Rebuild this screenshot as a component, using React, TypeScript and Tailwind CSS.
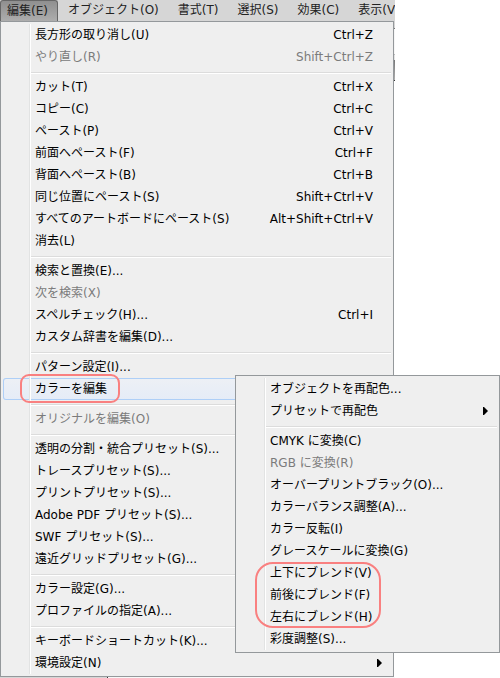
import { Fragment } from "react";
import clsx from "clsx";

type MenuEntry = {
  label: string;
  shortcut?: string;
  disabled?: boolean;
  arrow?: boolean;
  active?: boolean;
  children?: MenuEntry[][];
  // circles this row and the following ones
  markClass?: string;
};

const menuBar = ["編集(E)", "オブジェクト(O)", "書式(T)", "選択(S)", "効果(C)", "表示(V)"];

const colorGroups: MenuEntry[][] = [
  [{ label: "オブジェクトを再配色..." }, { label: "プリセットで再配色", arrow: true }],
  [
    { label: "CMYK に変換(C)" },
    { label: "RGB に変換(R)", disabled: true },
    { label: "オーバープリントブラック(O)..." },
    { label: "カラーバランス調整(A)..." },
    { label: "カラー反転(I)" },
    { label: "グレースケールに変換(G)" },
    { label: "上下にブレンド(V)", markClass: "top-0 left-[17px] w-[126px] h-[66px] rounded-[18px]" },
    { label: "前後にブレンド(F)" },
    { label: "左右にブレンド(H)" },
    { label: "彩度調整(S)..." },
  ],
];

const editGroups: MenuEntry[][] = [
  [
    { label: "長方形の取り消し(U)", shortcut: "Ctrl+Z" },
    { label: "やり直し(R)", shortcut: "Shift+Ctrl+Z", disabled: true },
  ],
  [
    { label: "カット(T)", shortcut: "Ctrl+X" },
    { label: "コピー(C)", shortcut: "Ctrl+C" },
    { label: "ペースト(P)", shortcut: "Ctrl+V" },
    { label: "前面へペースト(F)", shortcut: "Ctrl+F" },
    { label: "背面へペースト(B)", shortcut: "Ctrl+B" },
    { label: "同じ位置にペースト(S)", shortcut: "Shift+Ctrl+V" },
    { label: "すべてのアートボードにペースト(S)", shortcut: "Alt+Shift+Ctrl+V" },
    { label: "消去(L)" },
  ],
  [
    { label: "検索と置換(E)..." },
    { label: "次を検索(X)", disabled: true },
    { label: "スペルチェック(H)...", shortcut: "Ctrl+I" },
    { label: "カスタム辞書を編集(D)..." },
  ],
  [
    { label: "パターン設定(I)..." },
    {
      label: "カラーを編集",
      active: true,
      children: colorGroups,
      markClass: "-top-1 left-[17px] w-[100px] h-[29px] rounded-[9px]",
    },
  ],
  [{ label: "オリジナルを編集(O)", disabled: true }],
  [
    { label: "透明の分割・統合プリセット(S)..." },
    { label: "トレースプリセット(S)..." },
    { label: "プリントプリセット(S)..." },
    { label: "Adobe PDF プリセット(S)..." },
    { label: "SWF プリセット(S)..." },
    { label: "遠近グリッドプリセット(G)..." },
  ],
  [{ label: "カラー設定(G)..." }, { label: "プロファイルの指定(A)..." }],
  [{ label: "キーボードショートカット(K)..." }, { label: "環境設定(N)", arrow: true }],
];

function Separator() {
  return (
    <li role="separator" className="flex h-2">
      <span className="w-[27px] border-r border-[#e2e3e3]" />
      <span className="flex-1 border-l border-white pt-1">
        <span className="block h-[2px] border-t border-[#dcdcdc] bg-white" />
      </span>
    </li>
  );
}

function MenuRow({ entry }: { entry: MenuEntry }) {
  return (
    <li className="relative">
      <button
        disabled={entry.disabled}
        className={clsx(
          "flex h-[22px] w-full items-stretch text-left leading-[22px] whitespace-nowrap",
          entry.disabled ? "text-[#7b7b7b]" : "text-black",
          entry.active && "rounded-[3px] bg-linear-to-b from-[#edf0f5] to-[#e5ecf7] ring-1 ring-[#aecff7] ring-inset"
        )}
      >
        <span className="w-[27px] shrink-0 border-r border-[#e2e3e3]" />
        <span className="flex flex-1 items-center justify-between border-l border-white pr-[18px] pl-1">
          <span>{entry.label}</span>
          {entry.shortcut && <span>{entry.shortcut}</span>}
        </span>
        {entry.arrow && (
          <svg viewBox="0 0 5 8" className="mr-[9px] h-2 w-[5px] self-center fill-black">
            <path d="M0 0H1L5 4L1 8H0Z" />
          </svg>
        )}
      </button>
      {entry.markClass && (
        <span className={clsx("pointer-events-none absolute z-10 border-2 border-[#f98080]", entry.markClass)} />
      )}
      {entry.children && (
        <div className="absolute -top-[3px] left-[232px] z-20 w-[265px]">
          <Menu groups={entry.children} />
        </div>
      )}
    </li>
  );
}

function Menu({ groups }: { groups: MenuEntry[][] }) {
  return (
    <ul className="border border-[#94989b] bg-[#efefef] p-[2px]">
      {groups.map((group, i) => (
        <Fragment key={i}>
          {i > 0 && <Separator />}
          {group.map(entry => (
            <MenuRow key={entry.label} entry={entry} />
          ))}
        </Fragment>
      ))}
    </ul>
  );
}

export default function App() {
  return (
    <div className="bg-white font-['DejaVu_Sans','Noto_Sans_CJK_JP',sans-serif] text-[12px] text-black">
      <div className="w-[79%]">
        {/* Menu bar */}
        <nav className="flex h-[21px] overflow-hidden bg-[#d6d6d6] whitespace-nowrap text-[#222]">
          {menuBar.map((label, i) => (
            <button
              key={label}
              className={clsx(
                "shrink-0 pr-[9px]",
                i === 0
                  ? "rounded-t-[3px] border border-b-0 border-[#666] bg-linear-to-b from-[#8f8f8f] to-[#adadad] pl-[6px] leading-[20px]"
                  : "pl-[10px] leading-[21px]"
              )}
            >
              {label}
            </button>
          ))}
        </nav>

        {/* Edit menu, with a sliver of the window behind it */}
        <div className="flex">
          <div className="min-w-0 flex-1">
            <Menu groups={editGroups} />
          </div>
          <div className="flex w-px flex-col">
            <span className="h-[7px] bg-[#d6d6d6]" />
            <span className="h-px bg-[#777]" />
            <span className="h-[25px] bg-[#f6f6f6]" />
            <span className="h-px bg-[#bbb]" />
            <span className="h-[5px] bg-[#e4e4e4]" />
            <span className="h-5 bg-linear-to-b from-[#777] to-[#b0b0b0]" />
            <span className="h-px bg-[#333]" />
          </div>
        </div>
        <div className="flex h-px">
          <span className="w-[107px] bg-[#d6d6d6]" />
          <span className="w-px bg-[#333]" />
          <span className="flex-1 bg-[#f8f8f8]" />
        </div>
      </div>
    </div>
  );
}
